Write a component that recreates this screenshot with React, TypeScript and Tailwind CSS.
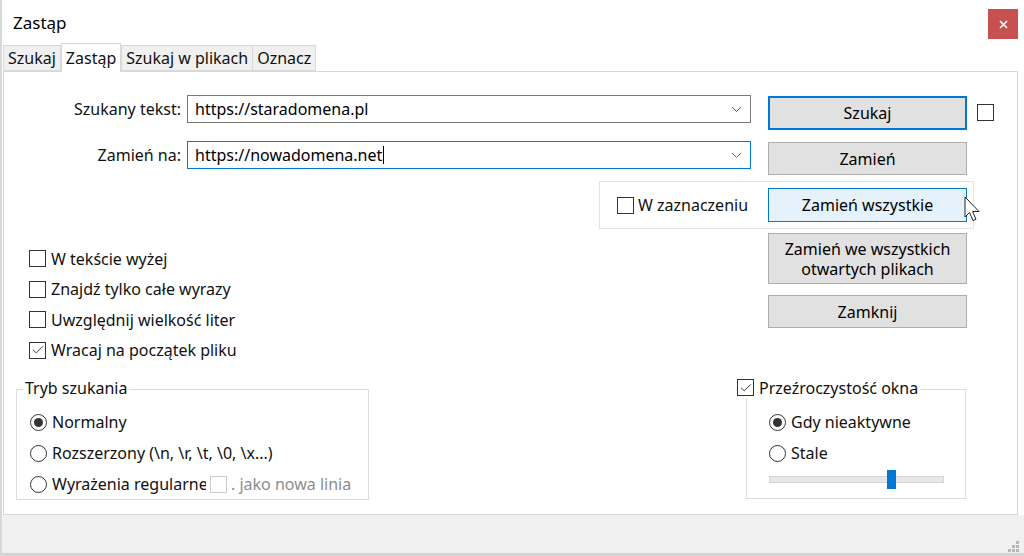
import { Check } from 'lucide-react'

const font = { fontFamily: '"Noto Sans", "Open Sans", sans-serif' }

function Box({ checked, disabled }: { checked?: boolean; disabled?: boolean }) {
  return (
    <span
      className={
        'flex h-[17px] w-[17px] shrink-0 items-center justify-center border bg-white ' +
        (disabled ? 'border-[#cccccc]' : 'border-[#333333]')
      }
    >
      {checked && <Check className="h-[14px] w-[14px] text-[#333333]" strokeWidth={1.6} />}
    </span>
  )
}

function Radio({ checked }: { checked?: boolean }) {
  return (
    <span className="flex h-[17px] w-[17px] shrink-0 items-center justify-center rounded-full border border-[#333333] bg-white">
      {checked && <span className="h-[9px] w-[9px] rounded-full bg-[#333333]" />}
    </span>
  )
}

function Chevron() {
  return (
    <svg width="11" height="7" viewBox="0 0 11 7" className="shrink-0">
      <path d="M1 1l4.5 4.5L10 1" fill="none" stroke="#606060" strokeWidth="1" />
    </svg>
  )
}

function Combo({ value, focused }: { value: string; focused?: boolean }) {
  return (
    <div
      className={
        'flex h-[28px] w-[564px] shrink-0 items-center border bg-white pl-[7px] pr-[8px] text-[#000000] ' +
        (focused ? 'border-[#0078d7]' : 'border-[#7a7a7a]')
      }
    >
      <span className="flex-1">
        {value}
        {focused && <span className="ml-[1px] inline-block h-[18px] w-[1px] translate-y-[3px] bg-black" />}
      </span>
      <Chevron />
    </div>
  )
}

function Btn({
  children,
  variant = 'normal',
  className = '',
}: {
  children: React.ReactNode
  variant?: 'normal' | 'default' | 'hover'
  className?: string
}) {
  const v =
    variant === 'default'
      ? 'border-2 border-[#0078d7] bg-[#e1e1e1]'
      : variant === 'hover'
        ? 'border border-[#0078d7] bg-[#e5f1fb]'
        : 'border border-[#adadad] bg-[#e1e1e1]'
  return (
    <div
      className={
        'flex w-[199px] shrink-0 items-center justify-center text-center leading-[20px] text-black ' + v + ' ' + className
      }
    >
      {children}
    </div>
  )
}

function Tab({ label, active }: { label: string; active?: boolean }) {
  return active ? (
    <div className="relative z-10 -mb-px flex h-[29px] items-center border border-b-0 border-[#d9d9d9] bg-white px-[4px]">
      {label}
    </div>
  ) : (
    <div className="mt-[2px] flex h-[26px] items-center border border-[#d9d9d9] bg-[#f0f0f0] px-[4px]">
      {label}
    </div>
  )
}

export default function App() {
  return (
    <div
      style={font}
      className="relative flex h-[556px] w-[1024px] flex-col overflow-hidden border-l-2 border-[#d8d8d8] bg-white text-[16px] text-[#111111]"
    >
      {/* title bar */}
      <div className="flex h-[43px] shrink-0 items-start justify-between">
        <div className="pl-[11px] pt-[10px] text-[17px] text-black">Zastąp</div>
        <div className="mr-[6px] mt-[9px] flex h-[30px] w-[30px] items-center justify-center bg-[#c75050]">
          <svg width="9" height="9" viewBox="0 0 9 9">
            <path d="M1 1l7 7M8 1L1 8" stroke="white" strokeWidth="1.6" />
          </svg>
        </div>
      </div>

      {/* tabs */}
      <div className="flex h-[28px] shrink-0 items-start pl-[1px]">
        <Tab label="Szukaj" />
        <Tab label="Zastąp" active />
        <Tab label="Szukaj w plikach" />
        <div className="-ml-px">
          <Tab label="Oznacz" />
        </div>
      </div>

      {/* tab panel */}
      <div className="ml-[1px] mr-[6px] h-[444px] shrink-0 border border-[#d9d9d9] bg-white">
        <div className="mt-[23px] flex items-start">
          <div className="w-[183px] shrink-0 pt-[2px] pr-[6px] text-right">Szukany tekst:</div>
          <Combo value="https://staradomena.pl" />
          <Btn variant="default" className="ml-[17px] mt-[1px] h-[34px]">
            Szukaj
          </Btn>
          <div className="ml-[10px] mt-[9px]">
            <Box />
          </div>
        </div>

        <div className="mt-[11px] flex items-start">
          <div className="w-[183px] shrink-0 pt-[2px] pr-[6px] text-right">Zamień na:</div>
          <Combo value="https://nowadomena.net" focused />
          <Btn className="ml-[17px] mt-[1px] h-[33px]">Zamień</Btn>
        </div>

        <div className="ml-[595px] mt-[6px] flex h-[48px] w-[375px] items-center border border-[#e3e3e3]">
          <div className="ml-[17px]">
            <Box />
          </div>
          <span className="ml-[4px] w-[130px] whitespace-nowrap">W zaznaczeniu</span>
          <Btn variant="hover" className="h-[34px]">
            Zamień wszystkie
          </Btn>
        </div>

        <div className="flex items-start">
          <div className="ml-[25px] mt-[21px] flex w-[739px] flex-col gap-[13.5px]">
            {[
              ['W tekście wyżej', false],
              ['Znajdź tylko całe wyrazy', false],
              ['Uwzględnij wielkość liter', false],
              ['Wracaj na początek pliku', true],
            ].map(([t, c]) => (
              <div key={t as string} className="flex h-[17px] items-center gap-[5px]">
                <Box checked={c as boolean} />
                <span>{t as string}</span>
              </div>
            ))}
          </div>
          <div className="mt-[4px] flex flex-col gap-[11px]">
            <Btn className="h-[51px]">
              Zamień we wszystkich
              <br />
              otwartych plikach
            </Btn>
            <Btn className="h-[33px]">Zamknij</Btn>
          </div>
        </div>

        {/* groups */}
        <div className="mt-[30px] flex items-start">
          <div className="relative ml-[12px] h-[111px] w-[353px] border border-[#dcdcdc]">
            <div className="absolute -top-[12px] left-[6px] bg-white px-[2px] leading-[20px]">Tryb szukania</div>
            <div className="ml-[13px] mt-[24px] flex flex-col gap-[14px]">
              <div className="flex h-[17px] items-center gap-[5px]">
                <Radio checked />
                <span>Normalny</span>
              </div>
              <div className="flex h-[17px] items-center gap-[5px]">
                <Radio />
                <span>Rozszerzony (\n, \r, \t, \0, \x...)</span>
              </div>
              <div className="flex h-[17px] items-center">
                <Radio />
                <span className="ml-[5px] w-[154px] overflow-hidden whitespace-nowrap">Wyrażenia regularne</span>
                <span className="ml-[4px]">
                  <Box disabled />
                </span>
                <span className="ml-[4px] text-[#8c8c8c]">. jako nowa linia</span>
              </div>
            </div>
          </div>

          <div className="relative ml-[377px] h-[110px] w-[220px] border border-[#dcdcdc]">
            <div className="absolute -left-[10px] -top-[12px] flex items-center gap-[5px] bg-white pr-[2px] leading-[20px]">
              <Box checked />
              <span>Przeźroczystość okna</span>
            </div>
            <div className="ml-[22px] mt-[24px] flex flex-col gap-[14px]">
              <div className="flex h-[17px] items-center gap-[5px]">
                <Radio checked />
                <span>Gdy nieaktywne</span>
              </div>
              <div className="flex h-[17px] items-center gap-[5px]">
                <Radio />
                <span>Stale</span>
              </div>
            </div>
            <div className="relative ml-[22px] mt-[14px] h-[7px] w-[175px] border border-[#d6d6d6] bg-[#e7e7e7]">
              <div className="absolute -top-[7px] left-[117px] h-[19px] w-[9px] bg-[#0078d7]" />
            </div>
          </div>
        </div>
      </div>

      {/* footer */}
      <div className="relative flex-1 border-b-[3px] border-[#d4d4d4] bg-[#f0f0f0]">
        <svg className="absolute bottom-[1px] right-[5px]" width="11" height="11" viewBox="0 0 11 11">
          {[
            [8, 0],
            [4, 4],
            [8, 4],
            [0, 8],
            [4, 8],
            [8, 8],
          ].map(([x, y]) => (
            <rect key={`${x}-${y}`} x={x} y={y} width="3" height="3" fill="#b8b8b8" />
          ))}
        </svg>
      </div>

      {/* mouse pointer over "Zamień wszystkie" */}
      <svg className="absolute left-[962px] top-[196px]" width="18" height="27" viewBox="0 0 18 27">
        <path
          d="M1 1v20l4.5-4.5 3.5 8 3-1.3-3.5-7.7H15z"
          fill="white"
          stroke="#222"
          strokeWidth="1"
          strokeLinejoin="round"
        />
      </svg>
    </div>
  )
}
